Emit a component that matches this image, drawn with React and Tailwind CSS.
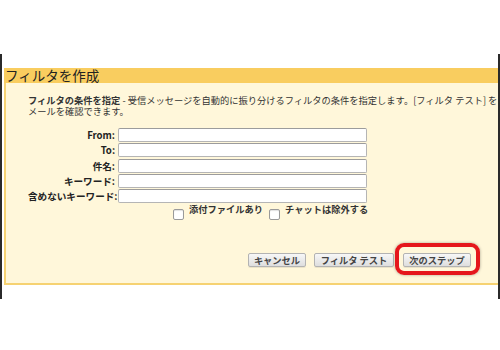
const fields = ['From:', 'To:', '件名:', 'キーワード:', '含めないキーワード:'];

function Checkbox({ label }) {
  return (
    <label className="flex items-start gap-[5px]">
      <span className="mt-[2px] block h-[11px] w-[11px] rounded-[2px] border border-[#9a9a9a] bg-white shadow-[inset_0_1px_1px_rgba(0,0,0,0.12)]" />
      <span className="-mt-[3px] font-bold text-[#333] text-[9.25px] leading-[10px]">{label}</span>
    </label>
  );
}

function Button({ children, width }) {
  return (
    <button
      className={`block h-[14px] ${width} rounded-[2px] border border-[#b3b3b3] bg-gradient-to-b from-[#f7f7f7] to-[#dedede] text-[9.25px] font-bold leading-[12px] text-[#444] shadow-[0_1px_0_rgba(0,0,0,0.08)]`}
    >
      {children}
    </button>
  );
}

export default function App() {
  return (
    <div className="h-[350px] w-[500px] overflow-hidden bg-white font-['Noto_Sans_CJK_JP','Noto_Sans',sans-serif]">
      <div className="mt-[54px] h-[245px] overflow-hidden border-l-2 border-r-2 border-[#2a2a2a] pl-[2px] pt-[14px]">
        <div className="h-[15px] bg-[#f9cd5f] pl-[1px] text-[13.5px] leading-[15px] text-[#222]">
          フィルタを作成
        </div>
        <div className="border-b-2 border-l-2 border-[#f6d272] bg-[#fff7da] pb-[16px] pl-[22px] pt-[12px]">
          <div className="text-[9.25px] leading-[10.5px] text-[#333]">
            <div className="whitespace-nowrap">
              <span className="font-bold">フィルタの条件を指定</span> - 受信メッセージを自動的に振り分けるフィルタの条件を指定します。[フィルタ テスト] を
            </div>
            <div className="whitespace-nowrap">メールを確認できます。</div>
          </div>

          <div className="mt-[12px] flex flex-col gap-[1.25px]">
            {fields.map((field) => (
              <div key={field} className="flex items-center gap-[3px]">
                <div className="w-[87px] whitespace-nowrap text-right text-[9.6px] font-bold leading-[10px] text-[#222]">
                  {field}
                </div>
                <div className="h-[14px] w-[249px] rounded-[2px] border border-[#b5b5b5] border-t-[#9c9c9c] bg-white" />
              </div>
            ))}
          </div>

          <div className="ml-[145px] mt-[4px] flex gap-[6px]">
            <Checkbox label="添付ファイルあり" />
            <Checkbox label="チャットは除外する" />
          </div>

          <div className="mt-[33px] flex items-start justify-end gap-[8px] pr-[27px]">
            <Button width="w-[58px]">キャンセル</Button>
            <Button width="w-[80px]">フィルタ テスト</Button>
            <div className="relative ml-[1px] flex">
              <Button width="w-[68px]">次のステップ</Button>
              <span className="pointer-events-none absolute -bottom-[8px] -left-[8px] -right-[9px] -top-[10px] rounded-[9px] border-[4px] border-[#e5161c] shadow-[0_0_3px_rgba(0,0,0,0.35)]" />
            </div>
          </div>
        </div>
      </div>
    </div>
  );
}
